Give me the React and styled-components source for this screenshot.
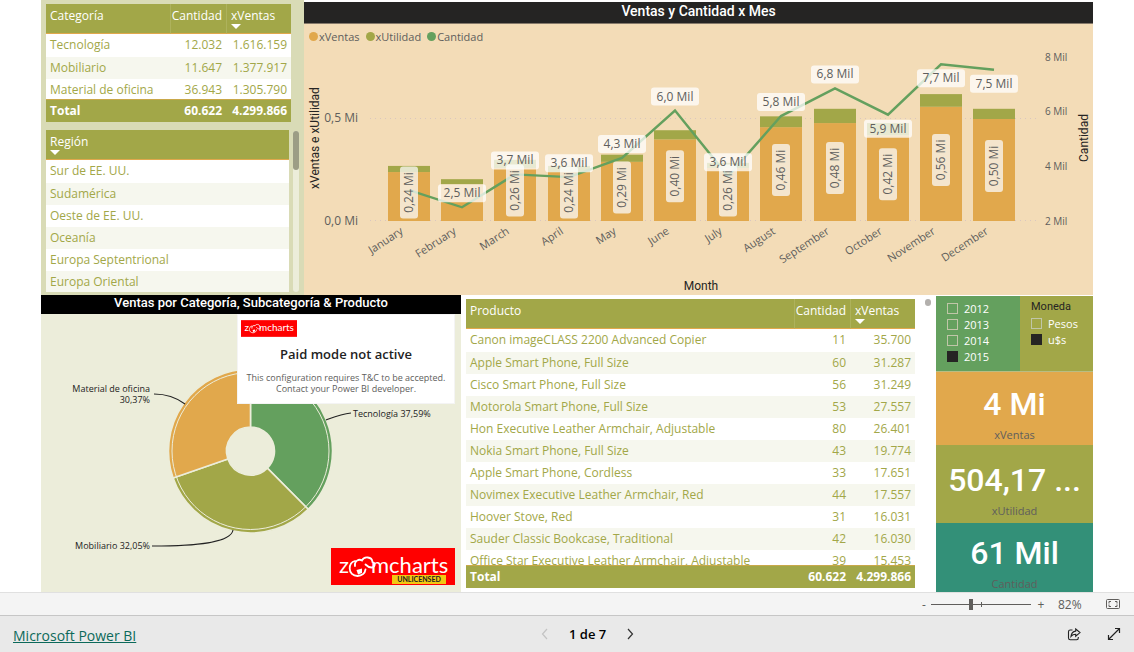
import styled, { createGlobalStyle } from 'styled-components';

const colors = {
  orange: '#e1a84c',
  olive: '#a2a748',
  green: '#64a05e',
  teal: '#339078',
  peach: '#f3dcb7',
  oliveLight: '#d9dbb6',
  oliveFaint: '#ecedda',
  dark: '#252423',
  text: '#605e5c',
};

const fonts = {
  ui: '"Open Sans", "Noto Sans", sans-serif',
  din: 'Roboto, "Liberation Sans", sans-serif',
};

const GlobalStyle = createGlobalStyle`
  * {
    box-sizing: border-box;
  }

  body {
    margin: 0;
    background-color: #fff;
    font-family: ${fonts.ui};
    font-size: 12px;
    color: ${colors.text};
  }

  button,
  input {
    font: inherit;
    color: inherit;
  }
`;

/* ---------- layout ---------- */

const Report = styled.main`
  padding: 0 41px;
`;

const TopRow = styled.section`
  display: grid;
  grid-template-columns: 263px 1fr;
`;

const BottomRow = styled.section`
  display: grid;
  grid-template-columns: 420fr 475fr 157px;
  height: 297px;
  overflow: hidden;
`;

const FilterPanel = styled.div`
  display: flex;
  flex-direction: column;
  gap: 8px;
  padding: 4px 5px 3px;
  background-color: ${colors.oliveLight};
`;

const RegionArea = styled.div`
  display: flex;
  gap: 4px;
`;

const ScrollTrack = styled.div`
  flex: none;
  width: 6px;
  margin-top: 1px;
  border-radius: 3px;
  background-color: ${colors.oliveFaint};
`;

const ScrollThumb = styled.div`
  flex: none;
  width: 6px;
  height: ${(props) => props.$height}px;
  border-radius: 3px;
  background-color: ${(props) => props.$color};
`;

const ChartPanel = styled.div`
  margin-top: 2px;
  background-color: ${colors.peach};
`;

const ChartTitle = styled.h2`
  height: 22px;
  margin: 0;
  border-bottom: 1px solid #85796a;
  background-color: ${colors.dark};
  color: #fff;
  font: 500 14px/18px ${fonts.din};
  text-align: center;
`;

const DonutPanel = styled.div`
  position: relative;
  background-color: ${colors.oliveFaint};
`;

const DonutTitle = styled.h2`
  height: 19px;
  margin: 0;
  background-color: #000;
  color: #fff;
  font: 500 13px/16px ${fonts.din};
  text-align: center;
`;

const Drawing = styled.svg`
  display: block;
  width: 100%;
`;

/* ---------- tables ---------- */

const TableFrame = styled.div`
  flex: auto;
  height: ${(props) => props.$height}px;
  margin-right: ${(props) => props.$gap || 0}px;
  overflow: hidden;
`;

const Table = styled.table`
  width: 100%;
  border-spacing: 0;
  table-layout: fixed;
  color: ${colors.olive};
`;

const HeadCell = styled.th`
  position: sticky;
  top: 0;
  width: ${(props) => (props.$width ? `${props.$width}px` : 'auto')};
  height: 30px;
  padding: ${(props) => (props.$align === 'right' ? '4px 4px 0 0' : '4px 4px 0')};
  border-bottom: 1px solid ${colors.orange};
  border-left: ${(props) => (props.$width ? '1px solid #aeb25c' : 'none')};
  background-color: ${colors.olive};
  color: #fff;
  font-weight: 400;
  line-height: 16px;
  text-align: ${(props) => props.$align || 'left'};
  vertical-align: top;
`;

const SortArrow = styled.span`
  display: block;
  width: 10px;
  height: 5px;
  margin-bottom: 4px;
  border: 5px solid transparent;
  border-top-color: #fff;
  border-bottom: none;
`;

const Cell = styled.td`
  height: 22px;
  padding: 0 4px;
  line-height: 22px;
  text-align: ${(props) => props.$align || 'left'};
  vertical-align: top;
  white-space: nowrap;
`;

const Row = styled.tr`
  background-color: #fff;

  &:nth-child(even) {
    background-color: #f6f7ee;
  }

  &:first-child ${Cell} {
    height: 23px;
  }
`;

const TotalCell = styled(Cell)`
  position: sticky;
  bottom: 0;
  border-top: 1px solid #c9a84a;
  background-color: ${colors.olive};
  color: #fff;
  font-weight: 700;
`;

/* ---------- slicers and cards ---------- */

const ProductArea = styled.div`
  display: flex;
  padding: 4px 5px 0;
`;

const SideColumn = styled.div`
  display: flex;
  flex-direction: column;
  padding-top: 1px;
`;

const Slicers = styled.div`
  display: grid;
  grid-template-columns: 84px 1fr;
  height: 76px;
`;

const Slicer = styled.fieldset`
  min-width: 0;
  margin: 0;
  padding: 4px 0 0 11px;
  border: none;
  border-bottom: 1px solid #b9bd83;
  background-color: ${(props) => props.$color};
`;

const SlicerTitle = styled.div`
  height: 15px;
  color: ${colors.dark};
  font: 400 11px/14px ${fonts.din};
`;

const Option = styled.label`
  display: flex;
  align-items: center;
  gap: 6px;
  height: 16px;
  color: #fff;
  font-size: 11px;
`;

const Checkbox = styled.input`
  width: 11px;
  height: 11px;
  margin: 0;
  appearance: none;
  border: 1px solid #c0c6a8;

  &:checked {
    border-color: ${colors.dark};
    background-color: ${colors.dark};
  }
`;

const Card = styled.div`
  flex: none;
  height: ${(props) => props.$height}px;
  padding-top: ${(props) => props.$top}px;
  background-color: ${(props) => props.$color};
  text-align: center;
`;

const CardValue = styled.div`
  color: #fff;
  font: 500 32px/40px ${fonts.din};
  white-space: nowrap;
`;

const CardLabel = styled.div`
  font-size: 11px;
  line-height: 22px;
`;

/* ---------- licence popup ---------- */

const Popup = styled.div`
  position: absolute;
  top: 19px;
  right: 6px;
  width: 218px;
  height: 90px;
  padding: 5px 3px;
  border: 1px solid #f4f4f4;
  background-color: #fff;
  text-align: center;
`;

const PopupTitle = styled.h3`
  margin: 7px 0 8px;
  color: #222;
  font-size: 13px;
  font-weight: 600;
  line-height: 20px;
`;

const PopupText = styled.p`
  margin: 0;
  font-size: 9px;
  line-height: 11px;
  white-space: nowrap;
`;

const SmallLogo = styled.svg`
  display: block;
  width: 56px;
  height: 17px;
`;

const BigLogo = styled.svg`
  position: absolute;
  right: 6px;
  bottom: 8px;
  width: 124px;
  height: 37px;
`;

/* ---------- chart legend ---------- */

const Legend = styled.ul`
  display: flex;
  gap: 6px;
  height: 26px;
  margin: 0;
  padding: 4px 5px;
  font-size: 11px;
  list-style: none;
`;

const LegendItem = styled.li`
  display: flex;
  align-items: center;
  gap: 1px;
  height: 17px;

  &::before {
    content: '';
    width: 9px;
    height: 9px;
    border-radius: 50%;
    background-color: ${(props) => props.$color};
  }
`;

/* ---------- bottom bars ---------- */

const ZoomBar = styled.div`
  display: flex;
  align-items: center;
  justify-content: flex-end;
  height: 24px;
  padding-right: 13px;
  border-top: 1px solid #e0e0e0;
  border-bottom: 1px solid #c6c6c6;
  background-color: #f4f4f4;
`;

const IconButton = styled.button`
  display: flex;
  align-items: center;
  justify-content: center;
  width: ${(props) => props.$width || 16}px;
  height: 16px;
  padding: 0;
  border: none;
  background: none;
`;

const Slider = styled.input`
  width: 100px;
  height: 12px;
  margin: 0 2px;
  appearance: none;
  background:
    linear-gradient(#605e5c, #605e5c) 50px 4px / 1px 5px no-repeat,
    linear-gradient(#605e5c, #605e5c) 0 6px / 100% 1px no-repeat;

  &::-webkit-slider-thumb {
    width: 4px;
    height: 11px;
    appearance: none;
    background-color: #605e5c;
  }
`;

const ZoomValue = styled.output`
  width: 24px;
  margin: 0 23px 0 9px;
`;

const Footer = styled.footer`
  display: grid;
  grid-template-columns: 13fr auto 12fr;
  align-items: center;
  height: 36px;
  padding: 0 12px 0 13px;
  background-color: #e9e9e9;
`;

const BrandLink = styled.a`
  justify-self: start;
  padding-top: 3px;
  color: #0c695a;
  font-size: 14px;
`;

const Pager = styled.nav`
  display: flex;
  align-items: center;
  gap: 16px;
  color: #000;
  font-size: 13px;
  font-weight: 600;
`;

const Actions = styled.div`
  display: flex;
  justify-content: flex-end;
  gap: 24px;
`;

/* ---------- data ---------- */

const categories = [
  ['Tecnología', '12.032', '1.616.159'],
  ['Mobiliario', '11.647', '1.377.917'],
  ['Material de oficina', '36.943', '1.305.790'],
];

const regions = [
  'Sur de EE. UU.',
  'Sudamérica',
  'Oeste de EE. UU.',
  'Oceanía',
  'Europa Septentrional',
  'Europa Oriental',
];

const products = [
  ['Canon imageCLASS 2200 Advanced Copier', '11', '35.700'],
  ['Apple Smart Phone, Full Size', '60', '31.287'],
  ['Cisco Smart Phone, Full Size', '56', '31.249'],
  ['Motorola Smart Phone, Full Size', '53', '27.557'],
  ['Hon Executive Leather Armchair, Adjustable', '80', '26.401'],
  ['Nokia Smart Phone, Full Size', '43', '19.774'],
  ['Apple Smart Phone, Cordless', '33', '17.651'],
  ['Novimex Executive Leather Armchair, Red', '44', '17.557'],
  ['Hoover Stove, Red', '31', '16.031'],
  ['Sauder Classic Bookcase, Traditional', '42', '16.030'],
  ['Office Star Executive Leather Armchair, Adjustable', '39', '15.453'],
];

const total = ['Total', '60.622', '4.299.866'];

// side tells where the quantity label sits relative to its point
const months = [
  { name: 'January', ventas: 0.24, utilidad: 0.03, cantidad: 3.13 },
  { name: 'February', ventas: 0.18, utilidad: 0.025, cantidad: 2.5, side: -1 },
  { name: 'March', ventas: 0.26, utilidad: 0.04, cantidad: 3.7, side: -1 },
  { name: 'April', ventas: 0.24, utilidad: 0.03, cantidad: 3.6, side: -1 },
  { name: 'May', ventas: 0.29, utilidad: 0.035, cantidad: 4.3, side: -1 },
  { name: 'June', ventas: 0.4, utilidad: 0.045, cantidad: 6.03, side: -1 },
  { name: 'July', ventas: 0.26, utilidad: 0.025, cantidad: 3.63, side: -1 },
  { name: 'August', ventas: 0.46, utilidad: 0.053, cantidad: 5.83, side: -1 },
  { name: 'September', ventas: 0.48, utilidad: 0.07, cantidad: 6.84, side: -1 },
  { name: 'October', ventas: 0.42, utilidad: 0.06, cantidad: 5.88, side: 1 },
  { name: 'November', ventas: 0.56, utilidad: 0.062, cantidad: 7.72, side: 1 },
  { name: 'December', ventas: 0.5, utilidad: 0.05, cantidad: 7.52, side: 1 },
];

const slices = [
  { name: 'Tecnología', share: 0.3759, color: colors.green },
  { name: 'Mobiliario', share: 0.3205, color: colors.olive },
  { name: 'Material de oficina', share: 0.3036, color: colors.orange },
];

const BASE = 171;
const barX = (i) => Math.round(84 + i * 53.2);
const barHeight = (value) => value * 204;
const lineY = (value) => BASE - (value - 2) * 27.4;
const comma = (value, digits) => value.toFixed(digits).replace('.', ',');

/* ---------- components ---------- */

function MonthlyChart() {
  const points = months
    .map((m, i) => `${barX(i) + 21},${lineY(m.cantidad)}`)
    .join(' ');

  return (
    <Drawing viewBox='0 0 789 245' fontFamily={fonts.ui} fontSize='12' fill={colors.text}>
      <g stroke='#d9c6c0' strokeDasharray='1 4'>
        <line x1='66' x2='732' y1='68.5' y2='68.5' />
        <line x1='66' x2='732' y1='170.5' y2='170.5' />
      </g>
      <text x='54' y='72' textAnchor='end'>0,5 Mi</text>
      <text x='54' y='175' textAnchor='end'>0,0 Mi</text>
      {[8, 6, 4, 2].map((tick) => (
        <text key={tick} x='741' y={lineY(tick) + 4} fontSize='10'>
          {tick} Mil
        </text>
      ))}

      {months.map((m, i) => {
        const low = barHeight(m.ventas);
        const high = barHeight(m.utilidad);
        return (
          <g key={m.name}>
            <rect x={barX(i)} y={BASE - low} width='42' height={low} fill={colors.orange} />
            <rect x={barX(i)} y={BASE - low - high} width='42' height={high} fill={colors.olive} />
            <text
              fontSize='11'
              textAnchor='end'
              transform={`translate(${barX(i) + 16} 183) rotate(-33)`}
            >
              {m.name}
            </text>
          </g>
        );
      })}

      <polyline points={points} fill='none' stroke={colors.green} strokeWidth='2.4' />

      {months.map((m, i) => {
        if (m.name === 'February') return null;
        const middle = BASE - barHeight(m.ventas) / 2 - 4;
        return (
          <g key={m.name} transform={`translate(${barX(i) + 21} ${middle}) rotate(-90)`}>
            <rect x='-26' y='-9' width='52' height='18' rx='3' fill='#faf9f8' opacity='0.75' />
            <text y='4' textAnchor='middle'>{comma(m.ventas, 2)} Mi</text>
          </g>
        );
      })}

      {months.map((m, i) =>
        m.side ? (
          <g
            key={m.name}
            transform={`translate(${barX(i) + 21} ${lineY(m.cantidad) + m.side * 14})`}
          >
            <rect x='-24' y='-9' width='48' height='18' rx='3' fill='#fff' opacity='0.75' />
            <text y='4' textAnchor='middle'>{comma(m.cantidad, 1)} Mil</text>
          </g>
        ) : null
      )}

      <g fontFamily={fonts.din} fontSize='12' fill={colors.dark} textAnchor='middle'>
        <text transform='translate(15 88) rotate(-90)'>xVentas e xUtilidad</text>
        <text transform='translate(784 88) rotate(-90)'>Cantidad</text>
        <text x='397' y='240'>Month</text>
      </g>
    </Drawing>
  );
}

function polar(radius, turn) {
  const angle = turn * 2 * Math.PI;
  return `${209.5 + radius * Math.sin(angle)} ${137 - radius * Math.cos(angle)}`;
}

function slicePath(from, to) {
  return `M${polar(24, from)} L${polar(82, from)} A82 82 0 0 1 ${polar(82, to)} L${polar(24, to)} A24 24 0 0 0 ${polar(24, from)}Z`;
}

function Donut() {
  let turn = 0;
  return (
    <Drawing viewBox='0 0 420 278' fontFamily={fonts.ui} fontSize='9' fill='#222'>
      {slices.map((s) => {
        const start = turn;
        turn += s.share;
        return (
          <path
            key={s.name}
            d={slicePath(start, turn)}
            fill={s.color}
            stroke={colors.oliveFaint}
            strokeWidth='1.6'
          />
        );
      })}
      <circle cx='209.5' cy='137' r='78.5' fill='none' stroke={colors.oliveFaint} />
      <g fill='none' stroke='#222' strokeWidth='1.1'>
        <path d='M113 80C126 80 136 84 144 90' />
        <path d='M285 106C293 103 300 100 310 99' />
        <path d='M111 232C155 232 190 229 192 216' />
      </g>
      <text x='109' y='78' textAnchor='end'>Material de oficina</text>
      <text x='109' y='89' textAnchor='end'>30,37%</text>
      <text x='109' y='235' textAnchor='end'>Mobiliario 32,05%</text>
      <text x='312' y='103'>Tecnología 37,59%</text>
    </Drawing>
  );
}

function LogoMark() {
  return (
    <>
      <text x='8' y='25'>z</text>
      <g fill='none' stroke='#fff' strokeWidth='1.8' strokeLinecap='round'>
        <path d='M24 13C20 14 18.7 17 18.7 20.5C18.7 25 22 28 26.5 28C31 28 34 25 34.5 21.5' />
        <path d='M24 18C23 13 28 10.5 31 12.5C33 8 41 8.5 41.5 14C45 15 44 19.5 40.5 19.5C38 19.5 36 18 34.5 16.5' />
      </g>
      <path d='M25.5 22L31 20.5V25L27 26.5Z' fill='#fff' />
      <text x='40' y='25'>mcharts</text>
    </>
  );
}

function DataTable({ head, rows }) {
  return (
    <Table>
      <thead>
        <tr>
          <HeadCell scope='col'>{head}</HeadCell>
          <HeadCell scope='col' $width={56} $align='right'>Cantidad</HeadCell>
          <HeadCell scope='col' $width={65}>
            xVentas
            <SortArrow />
          </HeadCell>
        </tr>
      </thead>
      <tbody>
        {rows.map(([name, cantidad, ventas]) => (
          <Row key={name}>
            <Cell>{name}</Cell>
            <Cell $align='right'>{cantidad}</Cell>
            <Cell $align='right'>{ventas}</Cell>
          </Row>
        ))}
      </tbody>
      <tfoot>
        <tr>
          <TotalCell>{total[0]}</TotalCell>
          <TotalCell $align='right'>{total[1]}</TotalCell>
          <TotalCell $align='right'>{total[2]}</TotalCell>
        </tr>
      </tfoot>
    </Table>
  );
}

function App() {
  return (
    <>
      <GlobalStyle />
      <Report>
        <TopRow>
          <FilterPanel>
            <TableFrame $height={118} $gap={8}>
              <DataTable head='Categoría' rows={categories} />
            </TableFrame>
            <RegionArea>
              <TableFrame $height={162}>
                <Table>
                  <thead>
                    <tr>
                      <HeadCell scope='col'>
                        Región
                        <SortArrow />
                      </HeadCell>
                    </tr>
                  </thead>
                  <tbody>
                    {regions.map((region) => (
                      <Row key={region}>
                        <Cell>{region}</Cell>
                      </Row>
                    ))}
                  </tbody>
                </Table>
              </TableFrame>
              <ScrollTrack>
                <ScrollThumb $height={39} $color='#9c9d85' />
              </ScrollTrack>
            </RegionArea>
          </FilterPanel>

          <ChartPanel>
            <ChartTitle>Ventas y Cantidad x Mes</ChartTitle>
            <Legend>
              <LegendItem $color={colors.orange}>xVentas</LegendItem>
              <LegendItem $color={colors.olive}>xUtilidad</LegendItem>
              <LegendItem $color={colors.green}>Cantidad</LegendItem>
            </Legend>
            <MonthlyChart />
          </ChartPanel>
        </TopRow>

        <BottomRow>
          <DonutPanel>
            <DonutTitle>Ventas por Categoría, Subcategoría &amp; Producto</DonutTitle>
            <Donut />
            <Popup>
              <SmallLogo viewBox='0 0 124 37' fontFamily='Lato, sans-serif' fontSize='22' fill='#fff'>
                <rect width='124' height='37' fill='#f00' />
                <LogoMark />
              </SmallLogo>
              <PopupTitle>Paid mode not active</PopupTitle>
              <PopupText>
                This configuration requires T&amp;C to be accepted.
                <br />
                Contact your Power BI developer.
              </PopupText>
            </Popup>
            <BigLogo viewBox='0 0 124 37' fontFamily='Lato, sans-serif' fontSize='22' fill='#fff'>
              <rect width='124' height='37' fill='#f00' />
              <LogoMark />
              <rect x='61' y='27' width='54' height='9' fill='#f2c811' />
              <text x='88' y='34' textAnchor='middle' fontSize='7' fontWeight='700' fill='#222'>
                UNLICENSED
              </text>
            </BigLogo>
          </DonutPanel>

          <ProductArea>
            <TableFrame $height={289} $gap={10}>
              <DataTable head='Producto' rows={products} />
            </TableFrame>
            <ScrollThumb $height={7} $color='#b3b0ad' />
          </ProductArea>

          <SideColumn>
            <Slicers>
              <Slicer $color={colors.green} aria-label='Año'>
                {['2012', '2013', '2014', '2015'].map((year) => (
                  <Option key={year}>
                    <Checkbox type='checkbox' defaultChecked={year === '2015'} />
                    {year}
                  </Option>
                ))}
              </Slicer>
              <Slicer $color={colors.olive} aria-label='Moneda'>
                <SlicerTitle>Moneda</SlicerTitle>
                {['Pesos', 'u$s'].map((coin) => (
                  <Option key={coin}>
                    <Checkbox type='checkbox' defaultChecked={coin === 'u$s'} />
                    {coin}
                  </Option>
                ))}
              </Slicer>
            </Slicers>
            <Card $color={colors.orange} $height={73} $top={12}>
              <CardValue>4 Mi</CardValue>
              <CardLabel>xVentas</CardLabel>
            </Card>
            <Card $color={colors.olive} $height={78} $top={15}>
              <CardValue>504,17 ...</CardValue>
              <CardLabel>xUtilidad</CardLabel>
            </Card>
            <Card $color={colors.teal} $height={70} $top={10}>
              <CardValue>61 Mil</CardValue>
              <CardLabel>Cantidad</CardLabel>
            </Card>
          </SideColumn>
        </BottomRow>
      </Report>

      <ZoomBar>
        <IconButton aria-label='Alejar' $width={10}>-</IconButton>
        <Slider type='range' min='0' max='100' defaultValue='40' aria-label='Zoom' />
        <IconButton aria-label='Acercar'>+</IconButton>
        <ZoomValue>82%</ZoomValue>
        <IconButton aria-label='Ajustar a la página'>
          <svg width='16' height='12' viewBox='0 0 16 12' fill='none' stroke='#605e5c'>
            <rect x='1.5' y='1.5' width='13' height='9' rx='1' />
            <path d='M6 3.5H4v2M4 6.5v2h2M10 3.5h2v2M12 6.5v2h-2' />
          </svg>
        </IconButton>
      </ZoomBar>

      <Footer>
        <BrandLink href='#powerbi'>Microsoft Power BI</BrandLink>
        <Pager aria-label='Páginas'>
          <IconButton aria-label='Anterior' disabled>
            <svg width='8' height='12' viewBox='0 0 8 12' fill='none' stroke='#c3c3c3' strokeWidth='1.2'>
              <path d='M6 1L1.5 6L6 11' />
            </svg>
          </IconButton>
          <span>1 de 7</span>
          <IconButton aria-label='Siguiente'>
            <svg width='8' height='12' viewBox='0 0 8 12' fill='none' stroke='#333' strokeWidth='1.2'>
              <path d='M2 1L6.5 6L2 11' />
            </svg>
          </IconButton>
        </Pager>
        <Actions>
          <IconButton aria-label='Compartir'>
            <svg width='14' height='13' viewBox='0 0 14 13' fill='none' stroke='#222' strokeWidth='1.1'>
              <path d='M5.5 2H3.2C2 2 1.5 2.6 1.5 3.7V10C1.5 11.2 2 11.7 3.2 11.7H9.6C10.8 11.7 11.3 11.2 11.3 10V9' />
              <path d='M8.7 1L13 4.6L8.7 8.2V6.2C6.6 6.2 5.2 6.8 4 8.4C4.3 5.4 5.8 3.4 8.7 3.1Z' />
            </svg>
          </IconButton>
          <IconButton aria-label='Pantalla completa'>
            <svg width='14' height='14' viewBox='0 0 14 14' fill='none' stroke='#222' strokeWidth='1.2'>
              <path d='M1.5 12.5L12.5 1.5M8 1.5H12.5V6M1.5 8V12.5H6' />
            </svg>
          </IconButton>
        </Actions>
      </Footer>
    </>
  );
}

export default App;
